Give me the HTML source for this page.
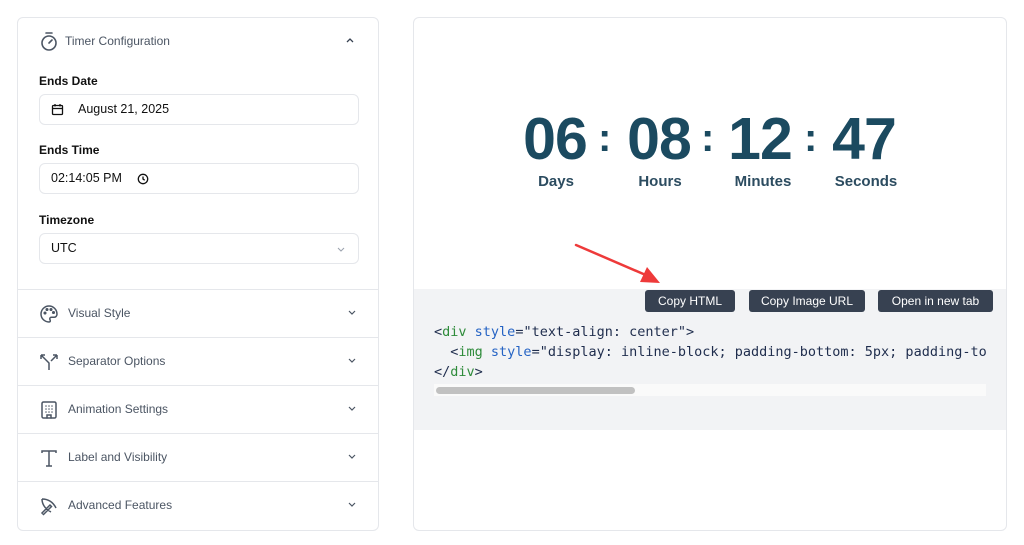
<!DOCTYPE html>
<html><head><style>
*{box-sizing:border-box;margin:0;padding:0}
body{width:1024px;height:545px;background:#fff;font-family:"Liberation Sans",sans-serif;position:relative;overflow:hidden;color:#111827}
.card{position:absolute;border:1px solid #e5e7eb;border-radius:6px;background:#fff}
.abs{position:absolute}
.lbl{position:absolute;left:21px;font-size:12px;font-weight:bold;color:#111}
.inp{position:absolute;left:21px;width:320px;height:31px;border:1px solid #e5e7eb;border-radius:6px;font-size:12.5px;color:#111;line-height:29px}
.row{position:absolute;left:0;width:361px;height:48px;border-top:1px solid #e5e7eb}
.row .t{position:absolute;left:50px;top:16px;font-size:12px;color:#4b5563}
.row svg.i{position:absolute;left:20px;top:13px}
.chev{position:absolute;right:22px;top:19px}
.dg{position:absolute;top:106px;font-size:59px;font-weight:bold;color:#1b4a60;letter-spacing:-1px;width:120px;text-align:center;line-height:66px}
.col{position:absolute;top:108px;font-size:40px;font-weight:bold;color:#1b4a60;line-height:60px}
.ul{position:absolute;top:173px;font-size:15px;font-weight:bold;color:#2c4c60;width:120px;text-align:center}
.btn{position:absolute;top:290px;height:22px;background:#374151;color:#fff;border-radius:3px;font-size:12px;line-height:22px;text-align:center}
.code{position:absolute;left:434px;font-family:"DejaVu Sans Mono","Liberation Mono",monospace;font-size:13.5px;color:#1f2d4d;white-space:pre}
.g{color:#2e8b3a}.b{color:#2563c4}
</style></head><body>
<div class="card" style="left:17px;top:17px;width:362px;height:514px">
 <svg class="abs" style="left:21px;top:13px" width="20" height="22" viewBox="0 0 20 22" fill="none" stroke="#4b5563" stroke-width="1.6" stroke-linecap="round"><line x1="7" y1="2" x2="13" y2="2"/><circle cx="10" cy="12" r="7"/><line x1="10" y1="12" x2="13" y2="9"/></svg>
 <div class="abs" style="left:47px;top:16px;font-size:12px;color:#4b5563">Timer Configuration</div>
 <svg class="abs" style="left:327px;top:18px" width="10" height="8" viewBox="0 0 10 8" fill="none" stroke="#374151" stroke-width="1.3"><path d="M2 6l3-3 3 3"/></svg>
 <div class="lbl" style="top:56px">Ends Date</div>
 <div class="inp" style="top:76px"><svg class="abs" style="left:11px;top:8px" width="13" height="13" viewBox="0 0 13 13" fill="none" stroke="#111" stroke-width="1.3"><rect x="1.5" y="2.5" width="10" height="9" rx="1"/><line x1="1.5" y1="5.5" x2="11.5" y2="5.5"/><line x1="4" y1="1" x2="4" y2="3.5"/><line x1="9" y1="1" x2="9" y2="3.5"/></svg><span class="abs" style="left:38px">August 21, 2025</span></div>
 <div class="lbl" style="top:125px">Ends Time</div>
 <div class="inp" style="top:145px"><span class="abs" style="left:11px">02:14:05 PM</span><svg class="abs" style="left:97px;top:9px" width="12" height="12" viewBox="0 0 12 12" fill="none" stroke="#111" stroke-width="1.3"><circle cx="6" cy="6" r="4.7"/><path d="M6 3.5V6l1.7 1.2"/></svg></div>
 <div class="lbl" style="top:195px">Timezone</div>
 <div class="inp" style="top:215px"><span class="abs" style="left:11px">UTC</span><svg class="abs" style="left:296px;top:12px" width="10" height="7" viewBox="0 0 10 7" fill="none" stroke="#9ca3af" stroke-width="1.1"><path d="M2 2l3 3 3-3"/></svg></div>
 <div class="row" style="top:271px"><svg class="i" width="22" height="22" viewBox="0 0 22 22" fill="none" stroke="#4b5563" stroke-width="1.5"><path d="M11 3a8 8 0 0 0 0 16c1.5 0 1.5-1.3 1-2.3-.6-1.2 0-2.4 1.5-2.4H16a3 3 0 0 0 3-3C19 6.5 15.4 3 11 3z"/><circle cx="7" cy="10" r=".8" fill="#4b5563"/><circle cx="9" cy="6.5" r=".8" fill="#4b5563"/><circle cx="13" cy="6.5" r=".8" fill="#4b5563"/><circle cx="15.5" cy="9.5" r=".8" fill="#4b5563"/></svg><div class="t">Visual Style</div><svg class="chev" width="10" height="7" viewBox="0 0 10 7" fill="none" stroke="#4b5563" stroke-width="1.2"><path d="M2 2l3 3 3-3"/></svg></div>
 <div class="row" style="top:319px"><svg class="i" width="22" height="22" viewBox="0 0 22 22" fill="none" stroke="#4b5563" stroke-width="1.5"><path d="M3 4h4M3 4v4M3 4l8 8v7M19 4h-4M19 4v4M19 4l-6 6"/></svg><div class="t">Separator Options</div><svg class="chev" width="10" height="7" viewBox="0 0 10 7" fill="none" stroke="#4b5563" stroke-width="1.2"><path d="M2 2l3 3 3-3"/></svg></div>
 <div class="row" style="top:367px"><svg class="i" width="22" height="22" viewBox="0 0 22 22" fill="none" stroke="#4b5563" stroke-width="1.5"><rect x="4" y="3" width="14" height="16" rx="1.5"/><path d="M9 19v-3h4v3M8 7h0M11 7h0M14 7h0M8 10h0M11 10h0M14 10h0M8 13h0M11 13h0M14 13h0" stroke-linecap="round"/></svg><div class="t">Animation Settings</div><svg class="chev" width="10" height="7" viewBox="0 0 10 7" fill="none" stroke="#4b5563" stroke-width="1.2"><path d="M2 2l3 3 3-3"/></svg></div>
 <div class="row" style="top:415px"><svg class="i" width="22" height="22" viewBox="0 0 22 22" fill="none" stroke="#4b5563" stroke-width="1.5"><path d="M4 6V4h14v2M11 4v15M8 19h6"/></svg><div class="t">Label and Visibility</div><svg class="chev" width="10" height="7" viewBox="0 0 10 7" fill="none" stroke="#4b5563" stroke-width="1.2"><path d="M2 2l3 3 3-3"/></svg></div>
 <div class="row" style="top:463px"><svg class="i" width="22" height="22" viewBox="0 0 22 22" fill="none" stroke="#4b5563" stroke-width="1.5"><path d="M4 4c6 0 11 3 14 9M4 4c0 5 3 10 9 13M12 10l-8 8 1.5 1.5 8-8z"/></svg><div class="t">Advanced Features</div><svg class="chev" width="10" height="7" viewBox="0 0 10 7" fill="none" stroke="#4b5563" stroke-width="1.2"><path d="M2 2l3 3 3-3"/></svg></div>
</div>
<div class="card" style="left:413px;top:17px;width:594px;height:514px"></div>
<div class="dg" style="left:495px">06</div><div class="col" style="left:598px">:</div>
<div class="dg" style="left:599px">08</div><div class="col" style="left:701px">:</div>
<div class="dg" style="left:700px">12</div><div class="col" style="left:804px">:</div>
<div class="dg" style="left:804px">47</div>
<div class="ul" style="left:496px">Days</div><div class="ul" style="left:600px">Hours</div><div class="ul" style="left:703px">Minutes</div><div class="ul" style="left:806px">Seconds</div>
<div class="abs" style="left:414px;top:289px;width:592px;height:141px;background:#f2f3f5"></div>
<svg class="abs" style="left:570px;top:240px" width="95" height="45" viewBox="0 0 95 45"><line x1="6" y1="5" x2="78" y2="36" stroke="#ee3a3a" stroke-width="2.5" stroke-linecap="round"/><path d="M90 43L70 42 77 27z" fill="#ee3a3a"/></svg>
<div class="btn" style="left:645px;width:90px">Copy HTML</div>
<div class="btn" style="left:749px;width:116px">Copy Image URL</div>
<div class="btn" style="left:878px;width:115px">Open in new tab</div>
<div class="code" style="top:324px">&lt;<span class="g">div</span> <span class="b">style</span>="text-align: center"&gt;</div>
<div class="code" style="top:344px;width:552px;overflow:hidden">  &lt;<span class="g">img</span> <span class="b">style</span>="display: inline-block; padding-bottom: 5px; padding-top</div>
<div class="code" style="top:364px">&lt;/<span class="g">div</span>&gt;</div>
<div class="abs" style="left:434px;top:384px;width:552px;height:12px;background:#fafafa"></div>
<div class="abs" style="left:436px;top:387px;width:199px;height:7px;background:#c1c1c1;border-radius:4px"></div>
</body></html>
